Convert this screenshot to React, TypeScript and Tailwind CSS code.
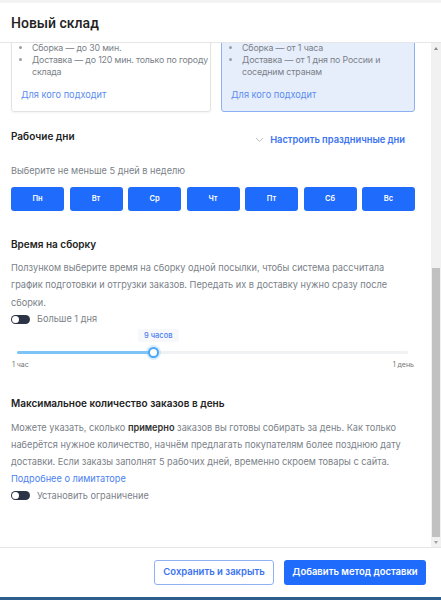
import React from "react";

const days = ["Пн", "Вт", "Ср", "Чт", "Пт", "Сб", "Вс"];

function Toggle() {
  return (
    <div className="w-[19px] h-[9px] rounded-full bg-[#2d3446] relative shrink-0">
      <div className="absolute left-[1px] top-[1px] w-[7px] h-[7px] rounded-full bg-white" />
    </div>
  );
}

export default function App() {
  return (
    <div
      className="w-[441px] h-[600px] flex flex-col bg-white overflow-hidden"
      style={{ fontFamily: "Inter, 'Noto Sans', sans-serif" }}
    >
      <div className="h-[3px] bg-[#f3f3f3]" />
      <div className="h-[40px] flex items-center px-[11px] border-b border-[#e6e6e6]">
        <span
          className="text-[14px] text-[#222] font-medium pt-[2px]"
          style={{ fontFamily: "Roboto, 'Noto Sans', sans-serif" }}
        >
          Новый склад
        </span>
      </div>
      <div className="flex-1 flex min-h-0">
        <div className="flex-1 overflow-hidden">
          <div className="-mt-[14px] px-[11px]">
            <div className="flex gap-[10px] pr-[5px]">
              <div className="flex-1 border border-[#e3e3e3] rounded-[3px] pl-[9px] pr-[2px] pt-[12px] h-[83px] shadow-[0_1px_2px_rgba(0,0,0,0.05)]">
                <ul className="text-[8.8px] tracking-[-0.15px] leading-[12px] text-[#7a7f88] pl-[11px] list-disc marker:text-[#9aa0a8]">
                  <li>Сборка — до 30 мин.</li>
                  <li className="whitespace-nowrap">
                    Доставка — до 120 мин. только по городу
                    <br />
                    склада
                  </li>
                </ul>
                <div className="mt-[10px] text-[9.2px] text-[#5a8cf0]">Для кого подходит</div>
              </div>
              <div className="flex-1 border border-[#8db0f3] bg-[#e7eefb] rounded-[3px] pl-[9px] pr-[2px] pt-[12px] h-[83px]">
                <ul className="text-[8.8px] tracking-[-0.15px] leading-[12px] text-[#7a7f88] pl-[11px] list-disc marker:text-[#9aa0a8]">
                  <li>Сборка — от 1 часа</li>
                  <li className="whitespace-nowrap">
                    Доставка — от 1 дня по России и
                    <br />
                    соседним странам
                  </li>
                </ul>
                <div className="mt-[10px] text-[9.2px] text-[#5a8cf0]">Для кого подходит</div>
              </div>
            </div>

            <div className="flex items-start justify-between pr-[15px] mt-[17px]">
              <div className="text-[10px] font-semibold text-[#222]">Рабочие дни</div>
              <div className="flex items-center gap-[6px] mt-[4px]">
                <svg width="9" height="6" viewBox="0 0 9 6" fill="none">
                  <path d="M1 1l3.5 3.5L8 1" stroke="#b8bec8" strokeWidth="1" />
                </svg>
                <span className="text-[9.3px] font-semibold text-[#3b73f0]">Настроить праздничные дни</span>
              </div>
            </div>

            <div className="mt-[17px] text-[9.2px] text-[#7a7f88]">Выберите не меньше 5 дней в неделю</div>

            <div className="mt-[9px] grid grid-cols-7 gap-[5.5px] pr-[5px]">
              {days.map((d) => (
                <div
                  key={d}
                  className="h-[24px] rounded-[3px] bg-[#1f6bfb] flex items-center justify-center text-white text-[7.5px] font-semibold"
                >
                  {d}
                </div>
              ))}
            </div>

            <div className="mt-[26px] text-[10px] font-semibold text-[#222]">Время на сборку</div>
            <p className="mt-[7px] text-[9.2px] leading-[17.5px] text-[#7a7f88] pr-[5px]">
              Ползунком выберите время на сборку одной посылки, чтобы система рассчитала график подготовки и отгрузки заказов. Передать их в доставку нужно сразу после сборки.
            </p>
            <div className="mt-[1px] flex items-center gap-[7px]">
              <Toggle />
              <span className="text-[9.2px] text-[#7a7f88]">Больше 1 дня</span>
            </div>

            <div className="relative mt-[3px] h-[40px]">
              <div className="absolute left-[127px] top-0 px-[6px] py-[1px] rounded-[2px] bg-[#f6f8fc] text-[7.5px] text-[#4b7ff0] font-medium">
                9 часов
              </div>
              <div className="absolute left-[6px] right-[12px] top-[22px] h-[3px] rounded-full bg-[#f0f1f3]" />
              <div className="absolute left-[6px] w-[136px] top-[22px] h-[3px] rounded-full bg-[#7ec3f8]" />
              <div className="absolute left-[137px] top-[18px] w-[11px] h-[11px] rounded-full bg-white border-[2px] border-[#4aa6f5] shadow-[0_0_0_2px_rgba(126,195,248,0.3)]" />
              <div className="absolute left-[1px] top-[31px] text-[7px] text-[#777]">1 час</div>
              <div className="absolute right-[6px] top-[31px] text-[7px] text-[#777]">1 день</div>
            </div>

            <div className="mt-[27px] text-[10px] font-semibold text-[#222]">Максимальное количество заказов в день</div>
            <p className="mt-[8px] text-[9.2px] leading-[17px] text-[#7a7f88] pr-[5px]">
              Можете указать, сколько <b className="font-semibold text-[#333]">примерно</b> заказов вы готовы собирать за день. Как только наберётся нужное количество, начнём предлагать покупателям более позднюю дату доставки. Если заказы заполнят 5 рабочих дней, временно скроем товары с сайта.
              <br />
              <span className="text-[#4b7ff0]">Подробнее о лимитаторе</span>
            </p>
            <div className="mt-[2px] flex items-center gap-[7px]">
              <Toggle />
              <span className="text-[9.2px] text-[#7a7f88]">Установить ограничение</span>
            </div>
          </div>
        </div>
        <div className="w-[10px] bg-[#f1f1f1] flex flex-col items-center">
          <div className="h-[10px] flex items-center justify-center">
            <div className="w-0 h-0 border-l-[2.5px] border-r-[2.5px] border-b-[3px] border-l-transparent border-r-transparent border-b-[#8a8a8a]" />
          </div>
          <div className="flex-1 w-full flex flex-col">
            <div className="h-[215px]" />
            <div className="flex-1 mx-[1px] bg-[#c1c1c1]" />
          </div>
          <div className="h-[10px] flex items-center justify-center">
            <div className="w-0 h-0 border-l-[2.5px] border-r-[2.5px] border-t-[3px] border-l-transparent border-r-transparent border-t-[#a0a0a0]" />
          </div>
        </div>
      </div>
      <div className="h-[50px] border-t border-[#e6e6e6] flex items-center justify-end gap-[10px] pr-[15px]">
        <div className="w-[120px] h-[25px] border border-[#8fb0f5] rounded-[3px] flex items-center justify-center text-[9.5px] font-semibold text-[#3b73f0]">
          Сохранить и закрыть
        </div>
        <div className="w-[142px] h-[25px] bg-[#1f6bfb] rounded-[3px] flex items-center justify-center text-[9.5px] font-semibold text-white">
          Добавить метод доставки
        </div>
      </div>
      <div className="h-[3px] bg-[#2c5d8c]" />
    </div>
  );
}
